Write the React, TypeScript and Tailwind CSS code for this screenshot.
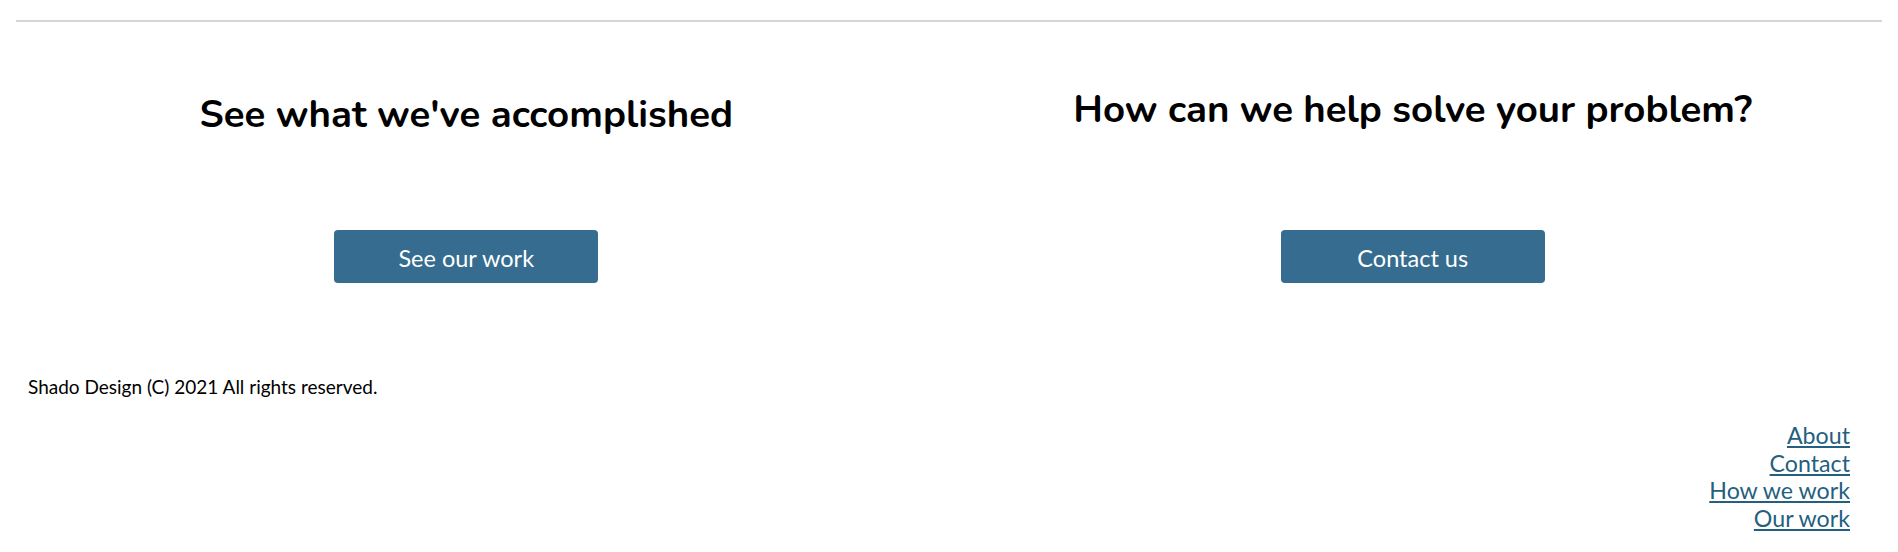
const headingFont = "font-['Nunito','Lato','Noto_Sans',sans-serif]";

const links = ["About", "Contact", "How we work", "Our work"];

export default function App() {
  return (
    <div className="min-h-screen bg-white font-['Lato','Liberation_Sans',sans-serif] text-black">
      <div className="px-[16px] pt-[20px]">
        <div className="h-[2px] bg-[#d6d6d6]" />
      </div>

      <section className="grid grid-cols-2 gap-x-[14px] pr-[19px] pt-[62px]">
        <div className="flex flex-col items-center">
          <h2 className={`${headingFont} mt-[9px] text-[38.4px] font-bold leading-[44px]`}>
            See what we've accomplished
          </h2>
          <a
            href="#"
            className="mt-[93px] flex h-[53px] w-[264px] items-center justify-center rounded-[4px] bg-[#356c8f] pt-[5px] text-[23.5px] text-white"
          >
            See our work
          </a>
        </div>
        <div className="flex flex-col items-center">
          <h2 className={`${headingFont} mt-[4px] text-[38.4px] font-bold leading-[44px]`}>
            How can we help solve your problem?
          </h2>
          <a
            href="#"
            className="mt-[98px] flex h-[53px] w-[264px] items-center justify-center rounded-[4px] bg-[#356c8f] pt-[5px] text-[23.5px] text-white"
          >
            Contact us
          </a>
        </div>
      </section>

      <footer className="pb-[20px] pt-[92px]">
        <p className="pl-[28px] text-[19px] leading-[24px]">Shado Design (C) 2021 All rights reserved.</p>
        <nav className="mt-[23px] flex flex-col items-end pr-[48px]">
          {links.map((link) => (
            <a key={link} href="#" className="text-[23.2px] leading-[27.6px] text-[#255f80] underline">
              {link}
            </a>
          ))}
        </nav>
      </footer>
    </div>
  );
}
